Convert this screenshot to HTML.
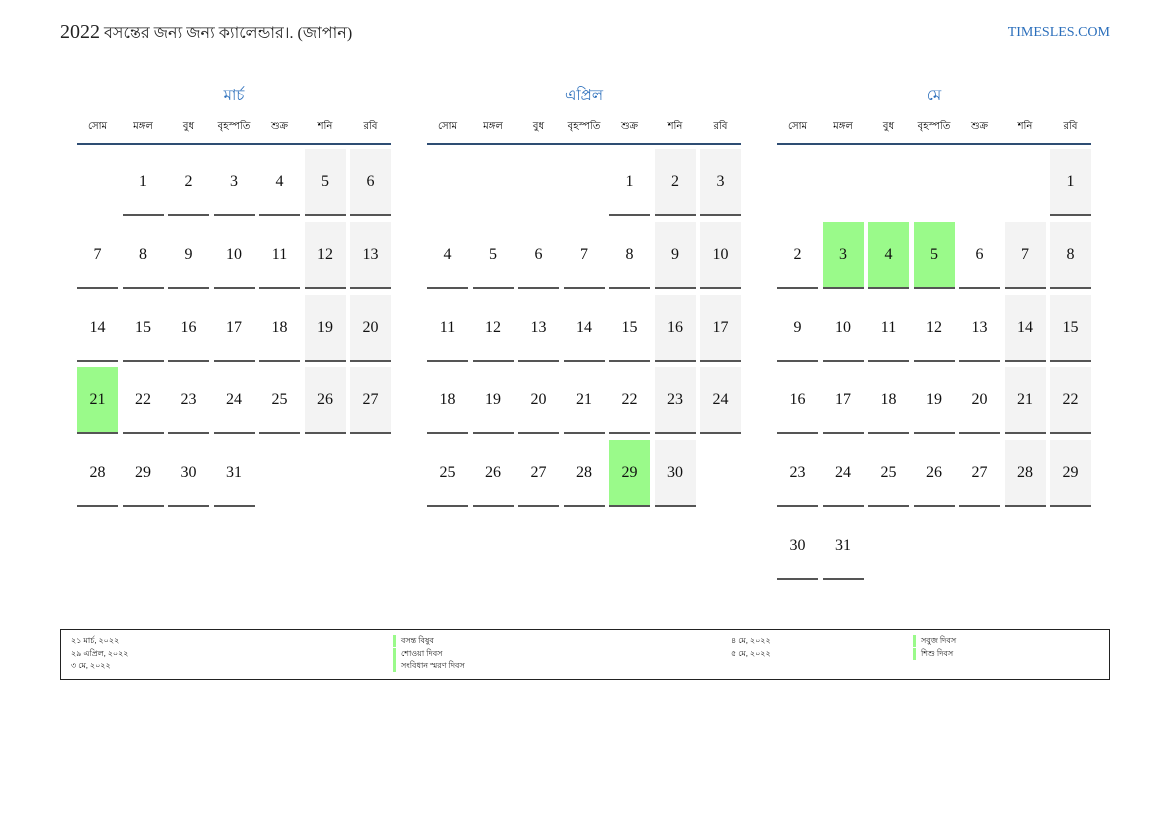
<!DOCTYPE html>
<html><head><meta charset="utf-8"><style>
body{margin:0;width:1169px;height:827px;background:#fff;position:relative;font-family:"Liberation Serif","Noto Sans CJK SC",serif;overflow:hidden}
.t{position:absolute;left:60px;top:20px;font-size:16px;color:#222;white-space:nowrap}
.t b{font-weight:normal;font-size:20px}
.site{position:absolute;right:59px;top:25px;font-size:14px;color:#2a6ebb}
.m{position:absolute;top:84px;width:314px}
.mt{text-align:center;font-size:15px;color:#2a6ebb;height:20px}
.dn{display:grid;grid-template-columns:repeat(7,41px);column-gap:4.5px;margin-top:15px;font-size:10px;text-align:center;height:20px}
.hl{height:2px;background:#2e4d73;margin-top:4px}
.g{display:grid;grid-template-columns:repeat(7,41px);grid-auto-rows:67px;column-gap:4.5px;row-gap:5.8px;margin-top:4px}
.g div{box-sizing:border-box;border-bottom:2px solid #555;font-size:16px;text-align:center;line-height:66px;color:#111}
.g div.e{border:none}
.g div.w{background:#f3f3f3}
.g div.h{background:#9afa8a}
.lg{position:absolute;left:60px;top:629px;width:1048px;height:49px;border:1px solid #222;font-size:8px;color:#222}
.lg span{position:absolute;line-height:12px}
.bar{border-left:3px solid #9afa8a;padding-left:5px}
</style></head><body>
<div class="t"><b>2022</b> বসন্তের জন্য জন্য ক্যালেন্ডার।. (জাপান)</div>
<div class="site">TIMESLES.COM</div>

<div class="m" style="left:77px">
<div class="mt">মার্চ</div>
<div class="dn"><span>সোম</span><span>মঙ্গল</span><span>বুধ</span><span>বৃহস্পতি</span><span>শুক্র</span><span>শনি</span><span>রবি</span></div>
<div class="hl"></div>
<div class="g">
<div class="e"></div><div>1</div><div>2</div><div>3</div><div>4</div><div class="w">5</div><div class="w">6</div>
<div>7</div><div>8</div><div>9</div><div>10</div><div>11</div><div class="w">12</div><div class="w">13</div>
<div>14</div><div>15</div><div>16</div><div>17</div><div>18</div><div class="w">19</div><div class="w">20</div>
<div class="h">21</div><div>22</div><div>23</div><div>24</div><div>25</div><div class="w">26</div><div class="w">27</div>
<div>28</div><div>29</div><div>30</div><div>31</div>
</div></div>

<div class="m" style="left:427px">
<div class="mt">এপ্রিল</div>
<div class="dn"><span>সোম</span><span>মঙ্গল</span><span>বুধ</span><span>বৃহস্পতি</span><span>শুক্র</span><span>শনি</span><span>রবি</span></div>
<div class="hl"></div>
<div class="g">
<div class="e"></div><div class="e"></div><div class="e"></div><div class="e"></div><div>1</div><div class="w">2</div><div class="w">3</div>
<div>4</div><div>5</div><div>6</div><div>7</div><div>8</div><div class="w">9</div><div class="w">10</div>
<div>11</div><div>12</div><div>13</div><div>14</div><div>15</div><div class="w">16</div><div class="w">17</div>
<div>18</div><div>19</div><div>20</div><div>21</div><div>22</div><div class="w">23</div><div class="w">24</div>
<div>25</div><div>26</div><div>27</div><div>28</div><div class="h">29</div><div class="w">30</div>
</div></div>

<div class="m" style="left:777px">
<div class="mt">মে</div>
<div class="dn"><span>সোম</span><span>মঙ্গল</span><span>বুধ</span><span>বৃহস্পতি</span><span>শুক্র</span><span>শনি</span><span>রবি</span></div>
<div class="hl"></div>
<div class="g">
<div class="e"></div><div class="e"></div><div class="e"></div><div class="e"></div><div class="e"></div><div class="e"></div><div class="w">1</div>
<div>2</div><div class="h">3</div><div class="h">4</div><div class="h">5</div><div>6</div><div class="w">7</div><div class="w">8</div>
<div>9</div><div>10</div><div>11</div><div>12</div><div>13</div><div class="w">14</div><div class="w">15</div>
<div>16</div><div>17</div><div>18</div><div>19</div><div>20</div><div class="w">21</div><div class="w">22</div>
<div>23</div><div>24</div><div>25</div><div>26</div><div>27</div><div class="w">28</div><div class="w">29</div>
<div>30</div><div>31</div>
</div></div>

<div class="lg">
<span style="left:10px;top:5px">২১ মার্চ, ২০২২</span>
<span style="left:10px;top:18px">২৯ এপ্রিল, ২০২২</span>
<span style="left:10px;top:30px">৩ মে, ২০২২</span>
<span class="bar" style="left:332px;top:5px">বসন্ত বিষুব</span>
<span class="bar" style="left:332px;top:18px">শোওয়া দিবস</span>
<span class="bar" style="left:332px;top:30px">সংবিধান স্মরণ দিবস</span>
<span style="left:670px;top:5px">৪ মে, ২০২২</span>
<span style="left:670px;top:18px">৫ মে, ২০২২</span>
<span class="bar" style="left:852px;top:5px">সবুজ দিবস</span>
<span class="bar" style="left:852px;top:18px">শিশু দিবস</span>
</div>
</body></html>
